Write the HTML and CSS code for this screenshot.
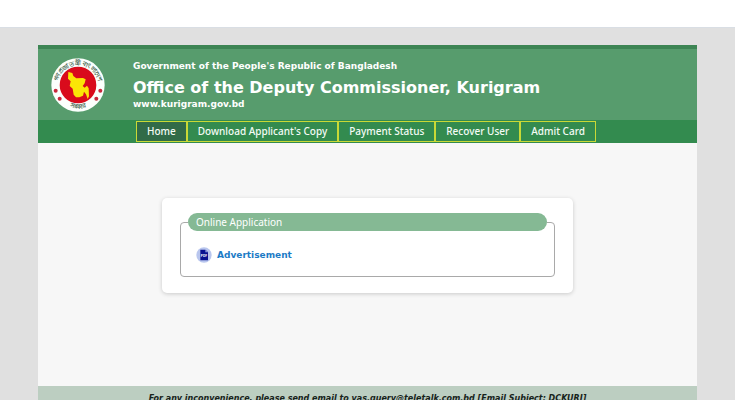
FILE: index.html
```html
<!DOCTYPE html>
<html lang="en">
<head>
<meta charset="utf-8">
<title>Office of the Deputy Commissioner, Kurigram</title>
<meta name="viewport" content="width=device-width, initial-scale=1">
<link rel="stylesheet" href="styles.css">
</head>
<body>
<div class="backdrop">
  <div class="page">
    <header class="banner">
      <svg class="seal" viewBox="0 0 162 162" role="img" aria-label="Government seal">
        <defs>
          <path id="arc-top" d="M22 93 A60 60 0 1 1 140 93"/>
          <path id="arc-bottom" d="M30 130 A70 70 0 0 0 132 130"/>
        </defs>
        <circle cx="81" cy="81" r="80" fill="#fbfffc"/>
        <circle cx="81" cy="81" r="55" fill="#d90b1c"/>
        <path fill="#fbe606" d="M52 42l12 3 3 9 9 7 20-1 8 4-3 12-6 8 6 5 7-6 5 8 1 24-4 8-5-14-6-8-3 12-11 5-10 0-7-8-3-18-9-8 3-14-8-8z"/>
        <g fill="#c8283c">
          <circle cx="14" cy="98" r="6"/><circle cx="26" cy="122" r="6"/>
          <circle cx="148" cy="98" r="6"/><circle cx="136" cy="122" r="6"/>
        </g>
        <text class="seal-text"><textPath href="#arc-top" startOffset="50%">গণপ্রজাতন্ত্রী বাংলাদেশ</textPath></text>
        <text class="seal-text"><textPath href="#arc-bottom" startOffset="50%">সরকার</textPath></text>
      </svg>
      <div class="titles">
        <p class="government">Government of the People's Republic of Bangladesh</p>
        <h1 class="office">Office of the Deputy Commissioner, Kurigram</h1>
        <p class="site">www.kurigram.gov.bd</p>
      </div>
    </header>
    <nav class="menu" aria-label="Main">
      <a class="menu-link active" href="#">Home</a>
      <a class="menu-link" href="#">Download Applicant's Copy</a>
      <a class="menu-link" href="#">Payment Status</a>
      <a class="menu-link" href="#">Recover User</a>
      <a class="menu-link" href="#">Admit Card</a>
    </nav>
    <main class="content">
      <section class="card">
        <fieldset class="group">
          <legend class="group-title">Online Application</legend>
          <a class="document" href="#">
            <svg class="pdf" viewBox="0 0 48 48" aria-hidden="true">
              <circle cx="24" cy="24" r="23" fill="#b9c6ee"/>
              <path fill="#07118f" d="M13 8h15l8 8v24H13z"/>
              <path fill="#8494dc" d="M28 8l8 8h-8z"/>
              <text class="pdf-text" x="24" y="31">PDF</text>
            </svg>
            <span>Advertisement</span>
          </a>
        </fieldset>
      </section>
    </main>
    <footer class="footer">For any inconvenience, please send email to vas.query@teletalk.com.bd [Email Subject: DCKURI]</footer>
  </div>
</div>
</body>
</html>
```
FILE: styles.css
```css
* {
  box-sizing: border-box;
}

body {
  margin: 0;
  height: 100vh;
  overflow: hidden;
  padding-top: 27px;
  background: #fff;
  font-family: "Noto Sans", sans-serif;
}

.backdrop {
  padding: 17px 38px;
  border-top: 1px solid #d9dee4;
  background: #e0e0e0;
}

.page {
  background: #f7f7f7;
}

.banner {
  display: flex;
  align-items: center;
  gap: 28px;
  height: 75px;
  padding: 0 13px;
  border-top: 4px solid #3d8554;
  background: #579c6d;
}

.seal {
  width: 54px;
  height: 54px;
  flex: none;
}

.seal-text {
  font: bold 19px "Noto Sans", sans-serif;
  fill: #4d6b56;
  text-anchor: middle;
}

.titles {
  color: #fff;
  font-family: "DejaVu Sans", sans-serif;
  font-weight: bold;
}

.government,
.site {
  margin: 0;
  font-size: 9px;
  line-height: 12px;
}

.office {
  margin: 6px 0 0;
  font-size: 16px;
  line-height: 20px;
}

.menu {
  display: flex;
  padding: 1px 98px;
  background: #338b4f;
}

.menu-link {
  padding: 2px 10px;
  border: 1px solid #c9d936;
  color: #f4fbf5;
  font-size: 10px;
  font-weight: 500;
  line-height: 15px;
  text-decoration: none;
  white-space: nowrap;
}

.active {
  background: #316b48;
}

.content {
  padding: 55px 124px 93px;
}

.card {
  padding: 15px 18px 16px;
  border-radius: 5px;
  background: #fff;
  box-shadow: 0 1px 4px #0000002e;
}

.group {
  min-width: 0;
  margin: 0;
  padding: 16px 7px 13px;
  border: 1px solid #a9a9a9;
  border-radius: 4px;
}

.group-title {
  width: 100%;
  padding: 0 8px;
  border-radius: 9px;
  background: #85b994;
  color: #fff;
  font-size: 10px;
  line-height: 18px;
}

.document {
  display: flex;
  align-items: center;
  gap: 5px;
  padding-left: 8px;
  color: #1c7bc6;
  font-family: "DejaVu Sans", sans-serif;
  font-size: 9px;
  font-weight: bold;
  line-height: 16px;
  text-decoration: none;
}

.pdf {
  width: 16px;
  height: 16px;
}

.pdf-text {
  font: bold 10px "Noto Sans", sans-serif;
  fill: #fff;
  text-anchor: middle;
}

.footer {
  padding: 6px 8px;
  background: #bccec1;
  color: #17231b;
  font-family: "DejaVu Sans", sans-serif;
  font-size: 8px;
  font-style: italic;
  font-weight: bold;
  line-height: 14px;
  text-align: center;
}
```
